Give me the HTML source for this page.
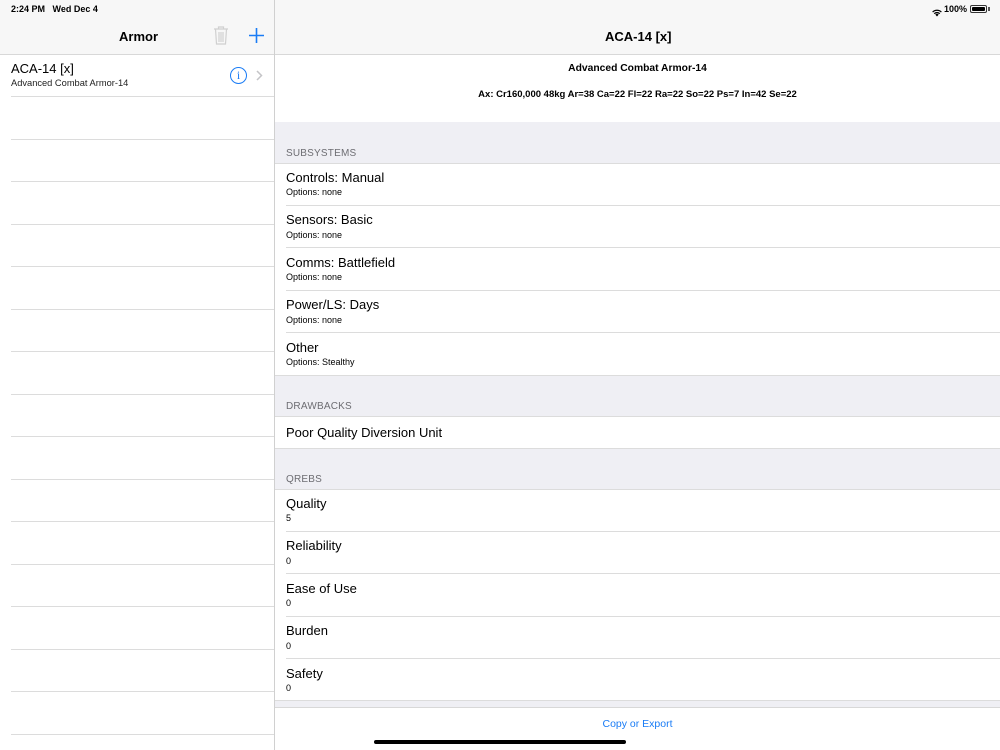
<!DOCTYPE html>
<html><head><meta charset="utf-8"><style>
*{margin:0;padding:0;box-sizing:border-box}
body{width:1000px;height:750px;overflow:hidden;background:#fff;font-family:"Liberation Sans",sans-serif;color:#000;position:relative}
.a{position:absolute}
.hdr{left:0;top:0;width:1000px;height:55px;background:#f7f7f7;border-bottom:1px solid #d8d8d8}
.sep{left:274px;top:0;width:1px;height:750px;background:#d0d0d0}
.line{position:absolute;height:1px;background:#dcdcdc}
.gray{position:absolute;left:275px;width:725px;background:#efeff4}
.sh{position:absolute;left:286px;font-size:10px;color:#6d6d72;letter-spacing:.2px}
.t{position:absolute;left:286px;font-size:13px}
.s{position:absolute;left:286px;font-size:9px}
</style></head><body>
<div class="a hdr"></div>
<div class="a" style="left:11px;top:4px;font-size:9px;font-weight:bold">2:24 PM&nbsp;&nbsp; Wed Dec 4</div>
<div class="a" style="left:931px;top:4px;">
<svg width="12" height="9" viewBox="0 0 12 9"><path d="M6 8.5L4.3 6.6a2.5 2.5 0 0 1 3.4 0z M2.8 5.2a4.6 4.6 0 0 1 6.4 0l-.9.9a3.4 3.4 0 0 0-4.6 0z M1.2 3.6a6.9 6.9 0 0 1 9.6 0l-.9.9a5.6 5.6 0 0 0-7.8 0z" fill="#000"/></svg></div>
<div class="a" style="left:944px;top:4px;font-size:9px;font-weight:bold">100%</div>
<div class="a" style="left:970px;top:5px;width:17px;height:8px;border:1px solid #333;border-radius:2px;padding:1px"><div style="width:100%;height:100%;background:#000;border-radius:1px"></div></div>
<div class="a" style="left:988px;top:7px;width:1.5px;height:4px;background:#555"></div>

<div class="a" style="left:119px;top:29px;font-size:13px;font-weight:bold">Armor</div>
<svg class="a" style="left:213px;top:26px" width="16" height="19" viewBox="0 0 16 19"><path d="M1 3h14M5.5 3V1h5v2M2.5 3l1 15h9l1-15M6 6v10M8 6v10M10 6v10" stroke="#d0d0d0" stroke-width="1.2" fill="none"/></svg>
<svg class="a" style="left:249px;top:28px" width="15" height="15"><path d="M7.5 0v15M0 7.5h15" stroke="#1a7cf5" stroke-width="1.6"/></svg>
<div class="a" style="left:605px;top:29px;font-size:13px;font-weight:bold">ACA-14 [x]</div>

<div class="a sep"></div>
<div class="a" style="left:11px;top:61px;font-size:13px">ACA-14 [x]</div>
<div class="a" style="left:11px;top:78px;font-size:9.3px;color:#222">Advanced Combat Armor-14</div>
<div class="a" style="left:230px;top:67px;width:17px;height:17px;border:1.3px solid #1a7cf5;border-radius:50%;color:#1a7cf5;font-size:12px;text-align:center;line-height:15px;font-family:'Liberation Serif',serif">i</div>
<svg class="a" style="left:256px;top:70px" width="7" height="11"><path d="M1 1l4.5 4.5L1 10" stroke="#c4c4c7" stroke-width="1.5" fill="none"/></svg>
<div class="line" style="left:11px;top:96px;width:263px"></div>
<div class="line" style="left:11px;top:139px;width:263px"></div>
<div class="line" style="left:11px;top:181px;width:263px"></div>
<div class="line" style="left:11px;top:224px;width:263px"></div>
<div class="line" style="left:11px;top:266px;width:263px"></div>
<div class="line" style="left:11px;top:309px;width:263px"></div>
<div class="line" style="left:11px;top:351px;width:263px"></div>
<div class="line" style="left:11px;top:394px;width:263px"></div>
<div class="line" style="left:11px;top:436px;width:263px"></div>
<div class="line" style="left:11px;top:479px;width:263px"></div>
<div class="line" style="left:11px;top:521px;width:263px"></div>
<div class="line" style="left:11px;top:564px;width:263px"></div>
<div class="line" style="left:11px;top:606px;width:263px"></div>
<div class="line" style="left:11px;top:649px;width:263px"></div>
<div class="line" style="left:11px;top:691px;width:263px"></div>
<div class="line" style="left:11px;top:734px;width:263px"></div>

<div class="a" style="left:275px;top:63px;width:725px;text-align:center;font-size:10.3px;font-weight:bold">Advanced Combat Armor-14</div>
<div class="a" style="left:275px;top:89px;width:725px;text-align:center;font-size:9.5px;font-weight:bold">Ax: Cr160,000 48kg Ar=38 Ca=22 Fl=22 Ra=22 So=22 Ps=7 In=42 Se=22</div>

<div class="gray" style="top:122px;height:41px"></div>
<div class="sh" style="top:148px">SUBSYSTEMS</div>
<div class="line" style="left:275px;top:163px;width:725px"></div>
<div class="t" style="top:170px">Controls: Manual</div><div class="s" style="top:187px">Options: none</div>
<div class="line" style="left:286px;top:205px;width:714px"></div>
<div class="t" style="top:212px">Sensors: Basic</div><div class="s" style="top:230px">Options: none</div>
<div class="line" style="left:286px;top:247px;width:714px"></div>
<div class="t" style="top:255px">Comms: Battlefield</div><div class="s" style="top:272px">Options: none</div>
<div class="line" style="left:286px;top:290px;width:714px"></div>
<div class="t" style="top:297px">Power/LS: Days</div><div class="s" style="top:315px">Options: none</div>
<div class="line" style="left:286px;top:332px;width:714px"></div>
<div class="t" style="top:340px">Other</div><div class="s" style="top:357px">Options: Stealthy</div>
<div class="gray" style="top:375px;height:41px"></div>
<div class="line" style="left:275px;top:375px;width:725px"></div>
<div class="sh" style="top:401px">DRAWBACKS</div>
<div class="line" style="left:275px;top:416px;width:725px"></div>
<div class="t" style="top:425px">Poor Quality Diversion Unit</div>
<div class="gray" style="top:448px;height:41px"></div>
<div class="line" style="left:275px;top:448px;width:725px"></div>
<div class="sh" style="top:474px">QREBS</div>
<div class="line" style="left:275px;top:489px;width:725px"></div>
<div class="t" style="top:496px">Quality</div><div class="s" style="top:513px">5</div>
<div class="line" style="left:286px;top:531px;width:714px"></div>
<div class="t" style="top:538px">Reliability</div><div class="s" style="top:556px">0</div>
<div class="line" style="left:286px;top:573px;width:714px"></div>
<div class="t" style="top:581px">Ease of Use</div><div class="s" style="top:598px">0</div>
<div class="line" style="left:286px;top:616px;width:714px"></div>
<div class="t" style="top:623px">Burden</div><div class="s" style="top:641px">0</div>
<div class="line" style="left:286px;top:658px;width:714px"></div>
<div class="t" style="top:666px">Safety</div><div class="s" style="top:683px">0</div>
<div class="gray" style="top:700px;height:7px"></div>
<div class="line" style="left:275px;top:700px;width:725px"></div>
<div class="line" style="left:275px;top:707px;width:725px;background:#d8d8d8"></div>
<div class="a" style="left:275px;top:718px;width:725px;text-align:center;font-size:10.5px;color:#1a7cf5">Copy or Export</div>
<div class="a" style="left:374px;top:740px;width:252px;height:4px;border-radius:2px;background:#000"></div>
</body></html>
